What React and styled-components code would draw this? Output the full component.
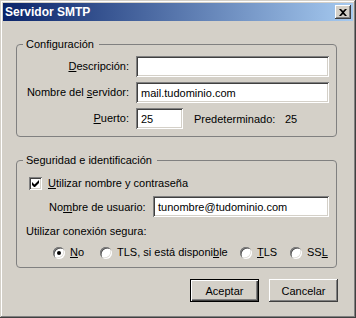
import React from "react";
import styled, { createGlobalStyle } from "styled-components";

const Global = createGlobalStyle`
  html, body { margin: 0; padding: 0; background: #d4d0c8; }
  body { font-family: "Liberation Sans", Arial, sans-serif; font-size: 11px; color: #000; }
  * { box-sizing: border-box; }
`;

const Window = styled.div`
  width: 356px;
  height: 318px;
  background: #d4d0c8;
  padding: 3px;
  display: flex;
  flex-direction: column;
  box-shadow: inset -1px -1px #404040, inset 1px 1px #d4d0c8,
    inset -2px -2px #808080, inset 2px 2px #fff;
`;

const TitleBar = styled.div`
  height: 18px;
  flex: none;
  display: flex;
  align-items: center;
  justify-content: space-between;
  padding: 0 2px 0 2px;
  background: linear-gradient(to right, #0a246a, #a6caf0);
`;

const Title = styled.span`
  color: #fff;
  font-weight: bold;
  font-size: 12px;
  line-height: 14px;
`;

const CloseButton = styled.button`
  width: 16px;
  height: 14px;
  padding: 0;
  border: none;
  background: #d4d0c8;
  display: flex;
  align-items: center;
  justify-content: center;
  box-shadow: inset -1px -1px #404040, inset 1px 1px #fff,
    inset -2px -2px #808080, inset 2px 2px #d4d0c8;
`;

const Body = styled.div`
  flex: 1;
  display: flex;
  flex-direction: column;
  padding: 17px 15px 0 13px;
`;

const Group = styled.fieldset`
  margin: ${(p) => (p.$first ? "0" : "17px")} 1px 0 0;
  min-width: 0;
  border: 1px solid #808080;
  border-radius: 4px;
  padding: ${(p) => p.$pad};
`;

const Legend = styled.legend`
  padding: 0 5px 0 3px;
  margin-left: -3px;
  line-height: 13px;
  height: 13px;
`;

const FormGrid = styled.div`
  display: grid;
  grid-template-columns: 103px 1fr;
  grid-auto-rows: 21px;
  column-gap: 7px;
  row-gap: 5px;
`;

const FieldLabel = styled.label`
  text-align: right;
  align-self: center;
  white-space: nowrap;
  line-height: 13px;
`;

const TextBox = styled.div`
  height: 21px;
  width: ${(p) => p.$width || "auto"};
  flex: ${(p) => (p.$width ? "none" : "1")};
  background: #fff;
  padding: 0 4px 0 5px;
  display: flex;
  align-items: center;
  white-space: nowrap;
  overflow: hidden;
  box-shadow: inset 1px 1px #808080, inset -1px -1px #fff,
    inset 2px 2px #404040, inset -2px -2px #d4d0c8;
`;

const PortRow = styled.div`
  display: flex;
  align-items: center;
`;

const DefaultLabel = styled.span`
  width: 91px;
  margin-left: 11px;
  white-space: nowrap;
`;

const Stack = styled.div`
  display: flex;
  flex-direction: column;
`;

const CheckRow = styled.div`
  display: flex;
  align-items: center;
  gap: 6px;
  height: 13px;
  margin-left: 3px;
  line-height: 13px;
`;

const CheckBox = styled.span`
  width: 13px;
  height: 13px;
  background: #fff;
  display: flex;
  align-items: center;
  justify-content: center;
  box-shadow: inset 1px 1px #808080, inset -1px -1px #fff,
    inset 2px 2px #404040, inset -2px -2px #d4d0c8;
`;

const UserRow = styled.div`
  display: flex;
  align-items: center;
  margin-top: 6px;
  padding-left: 23px;
`;

const UserLabel = styled.label`
  width: 104px;
  flex: none;
  white-space: nowrap;
`;

const Caption = styled.div`
  margin-top: 8px;
  line-height: 13px;
  height: 13px;
`;

const RadioRow = styled.div`
  display: grid;
  grid-template-columns: 47px 140px 50px auto;
  margin: 8px 0 0 27px;
  height: 13px;
`;

const RadioItem = styled.label`
  display: flex;
  align-items: center;
  gap: 5px;
  white-space: nowrap;
  line-height: 13px;
`;

const Radio = styled.span`
  width: 12px;
  height: 12px;
  border-radius: 50%;
  background: #fff;
  display: flex;
  align-items: center;
  justify-content: center;
  box-shadow: inset 1px 1px #808080, inset -1px -1px #fff,
    inset 1.5px 1.5px #404040, inset -1.5px -1.5px #d4d0c8;
  &::after {
    content: "";
    width: 4px;
    height: 4px;
    border-radius: 50%;
    background: ${(p) => (p.$checked ? "#000" : "transparent")};
  }
`;

const ButtonRow = styled.div`
  display: flex;
  justify-content: flex-end;
  gap: 10px;
  margin-top: 11px;
`;

const Button = styled.button`
  width: 69px;
  height: 23px;
  padding: 0;
  border: none;
  background: #d4d0c8;
  font: inherit;
  color: #000;
  box-shadow: ${(p) =>
    p.$default
      ? "inset 0 0 0 1px #000, inset 2px 2px #fff, inset -2px -2px #404040, inset -3px -3px #808080"
      : "inset -1px -1px #404040, inset 1px 1px #fff, inset -2px -2px #808080, inset 2px 2px #d4d0c8"};
`;

const U = styled.span`
  text-decoration: underline;
`;

export default function App() {
  return (
    <>
      <Global />
      <Window>
        <TitleBar>
          <Title>Servidor SMTP</Title>
          <CloseButton aria-label="Cerrar">
            <svg width="8" height="7" viewBox="0 0 8 7">
              <path d="M0 0h2l2 2 2-2h2L5 3.5 8 7H6L4 5 2 7H0l3-3.5z" fill="#000" />
            </svg>
          </CloseButton>
        </TitleBar>
        <Body>
          <Group $first $pad="5px 7px 7px 9px">
            <Legend>Configuración</Legend>
            <FormGrid>
              <FieldLabel>
                <U>D</U>escripción:
              </FieldLabel>
              <TextBox />
              <FieldLabel>
                Nombre del <U>s</U>ervidor:
              </FieldLabel>
              <TextBox>mail.tudominio.com</TextBox>
              <FieldLabel>
                <U>P</U>uerto:
              </FieldLabel>
              <PortRow>
                <TextBox $width="47px">25</TextBox>
                <DefaultLabel>Predeterminado:</DefaultLabel>
                <span>25</span>
              </PortRow>
            </FormGrid>
          </Group>
          <Group $pad="10px 7px 8px 9px">
            <Legend>Seguridad e identificación</Legend>
            <Stack>
              <CheckRow>
                <CheckBox>
                  <svg width="7" height="7" viewBox="0 0 7 7">
                    <path d="M0 2v3l2 2h1l4-4V0L2.5 4.5z" fill="#000" />
                  </svg>
                </CheckBox>
                <span>
                  <U>U</U>tilizar nombre y contraseña
                </span>
              </CheckRow>
              <UserRow>
                <UserLabel>
                  No<U>m</U>bre de usuario:
                </UserLabel>
                <TextBox>tunombre@tudominio.com</TextBox>
              </UserRow>
              <Caption>Utilizar conexión segura:</Caption>
              <RadioRow>
                <RadioItem>
                  <Radio $checked />
                  <span>
                    <U>N</U>o
                  </span>
                </RadioItem>
                <RadioItem>
                  <Radio />
                  <span>
                    TLS, si está disponi<U>b</U>le
                  </span>
                </RadioItem>
                <RadioItem>
                  <Radio />
                  <span>
                    <U>T</U>LS
                  </span>
                </RadioItem>
                <RadioItem>
                  <Radio />
                  <span>
                    SS<U>L</U>
                  </span>
                </RadioItem>
              </RadioRow>
            </Stack>
          </Group>
          <ButtonRow>
            <Button $default>Aceptar</Button>
            <Button>Cancelar</Button>
          </ButtonRow>
        </Body>
      </Window>
    </>
  );
}
